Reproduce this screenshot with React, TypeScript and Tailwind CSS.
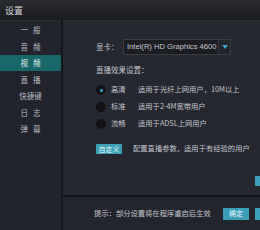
import React from "react";

const CJK = { fontFamily: '"Noto Sans CJK SC", "Noto Sans", sans-serif' };

function Radio({ checked, label, desc }: { checked?: boolean; label: string; desc: string }) {
  return (
    <div className="flex h-[17px] items-center">
      <div className="flex h-[10px] w-[10px] items-center justify-center rounded-full bg-[#131418]">
        {checked && <div className="h-[3px] w-[3px] rounded-full bg-[#33b6d2]" />}
      </div>
      <div className="ml-[5px] w-[27px] text-[7.3px] text-[#c4c6cc]">{label}</div>
      <div className="whitespace-nowrap text-[7.3px] text-[#c4c6cc]">{desc}</div>
    </div>
  );
}

export default function App() {
  const items = [
    ["一", "般"],
    ["音", "频"],
    ["视", "频"],
    ["直", "播"],
    ["快捷键"],
    ["日", "志"],
    ["弹", "幕"],
  ];
  return (
    <div className="flex h-[230px] w-[260px] flex-col overflow-hidden bg-[#252731] leading-none" style={CJK}>
      <div className="flex h-[20px] shrink-0 items-center bg-gradient-to-b from-[#2b2c31] to-[#1a1b1f] pl-[5px] text-[9px] text-[#d6d6d8]">
        设置
      </div>
      <div className="flex flex-1">
        <div className="flex w-[61px] shrink-0 flex-col border-t border-[#2c2e37] bg-[#22242d] pt-[0.5px]">
          {items.map((it, i) => (
            <div
              key={i}
              className={
                "flex h-[16.5px] items-center justify-center gap-[5px] text-[7.5px] " +
                (i === 2 ? "bg-[#19676b] text-[#e8f0f0]" : "text-[#b8bac1]")
              }
            >
              {it.map((c, j) => (
                <span key={j}>{c}</span>
              ))}
            </div>
          ))}
        </div>
        <div className="w-[2px] shrink-0 bg-[#15161b]" />
        <div className="flex flex-1 flex-col">
          <div className="flex h-[175px] flex-col border-t border-[#2c2e37] pl-[33px] pt-[18px]">
            <div className="flex h-[16px] items-center">
              <div className="w-[27px] text-[7.5px] text-[#c4c6cc]">显卡：</div>
              <div className="flex h-[16px] w-[108px] items-center border border-[#3a3d45] bg-[#1b1d23]">
                <div
                  className="flex-1 whitespace-nowrap pl-[3px] text-[7.6px] text-[#c8cacf]"
                  style={{ fontFamily: '"Liberation Sans", Arial, sans-serif' }}
                >
                  Intel(R) HD Graphics 4600
                </div>
                <div className="flex h-full w-[12px] items-center justify-center border-l border-[#34373f] bg-[#22252b]">
                  <svg width="6" height="4" viewBox="0 0 6 4">
                    <path d="M0 0 H6 L3 4 Z" fill="#37a9c7" />
                  </svg>
                </div>
              </div>
            </div>
            <div className="mt-[9px] flex h-[12px] items-center text-[7.5px] text-[#c4c6cc]">直播效果设置：</div>
            <div className="mt-[5.5px] flex flex-col">
              <Radio checked label="高清" desc="适用于光纤上网用户，10M以上" />
              <Radio label="标准" desc="适用于2-4M宽带用户" />
              <Radio label="流畅" desc="适用于ADSL上网用户" />
            </div>
            <div className="mt-[11.5px] flex items-center">
              <div className="flex h-[10px] w-[26px] items-center justify-center bg-[#3a9fb7] text-[7px] text-[#e6f4f8]">
                自定义
              </div>
              <div className="ml-[11px] whitespace-nowrap text-[7.3px] text-[#c4c6cc]">配置直播参数，适用于有经验的用户</div>
            </div>
            <div className="ml-[159px] mt-[22px] h-[10px] w-[30px] shrink-0 bg-[#3a9fb7]" />
          </div>
          <div className="h-[2px] bg-[#131419]" />
          <div className="flex flex-1 items-center bg-[#23252e] pl-[31px]">
            <div className="w-[129px] whitespace-nowrap text-[7.3px] text-[#c4c6cc]">提示：部分设置将在程序重启后生效</div>
            <div className="flex h-[12px] w-[26px] shrink-0 items-center justify-center bg-[#3a9fb7] text-[7px] text-[#e6f4f8]">
              确定
            </div>
            <div className="ml-[6px] h-[12px] w-[30px] shrink-0 bg-[#3a9fb7]" />
          </div>
        </div>
      </div>
    </div>
  );
}
